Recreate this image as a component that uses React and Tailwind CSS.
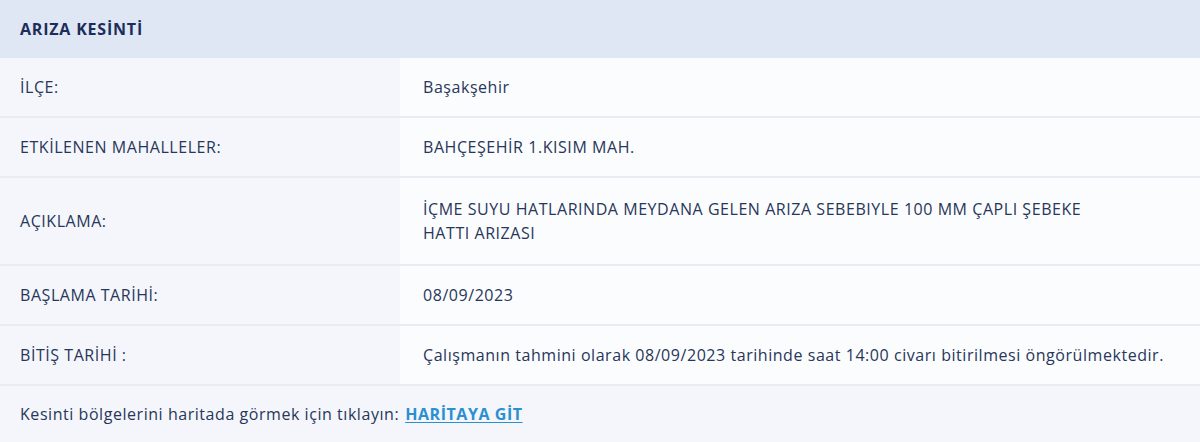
const rows = [
  { label: "İLÇE:", value: "Başakşehir" },
  { label: "ETKİLENEN MAHALLELER:", value: "BAHÇEŞEHİR 1.KISIM MAH." },
  {
    label: "AÇIKLAMA:",
    value:
      "İÇME SUYU HATLARINDA MEYDANA GELEN ARIZA SEBEBIYLE 100 MM ÇAPLI ŞEBEKE HATTI ARIZASI",
    tall: true,
  },
  { label: "BAŞLAMA TARİHİ:", value: "08/09/2023" },
  {
    label: "BİTİŞ TARİHİ :",
    value:
      "Çalışmanın tahmini olarak 08/09/2023 tarihinde saat 14:00 civarı bitirilmesi öngörülmektedir.",
  },
];

export default function App() {
  return (
    <div
      className="w-[1200px] h-[442px] bg-[#f4f6fb] text-[16px] tracking-[0.55px] text-[#283659]"
      style={{ fontFamily: "'Open Sans', 'Noto Sans', sans-serif" }}
    >
      {/* Header */}
      <div className="h-[58px] bg-[#dfe7f5] flex items-center px-5">
        <h2 className="font-bold text-[16px] tracking-[0.8px] text-[#1c2d5a]">
          ARIZA KESİNTİ
        </h2>
      </div>

      {/* Rows */}
      {rows.map((row) => (
        <div
          key={row.label}
          className={`flex border-b-2 border-[#e8ebf1] ${
            row.tall ? "h-[88px]" : "h-[60px]"
          }`}
        >
          <div className="w-[400px] bg-[#f4f6fb] flex items-center px-5">
            {row.label}
          </div>
          <div className="flex-1 bg-[#fbfcfe] flex items-center pl-[23px] pr-[10px] leading-[24px]">
            <span className={row.tall ? "max-w-[690px]" : ""}>{row.value}</span>
          </div>
        </div>
      ))}

      {/* Footer */}
      <div className="h-[55px] flex items-center px-5">
        <span>Kesinti bölgelerini haritada görmek için tıklayın:</span>
        <a
          href="#"
          className="ml-1.5 font-bold text-[#2b8fd0] underline underline-offset-2"
        >
          HARİTAYA GİT
        </a>
      </div>
    </div>
  );
}
